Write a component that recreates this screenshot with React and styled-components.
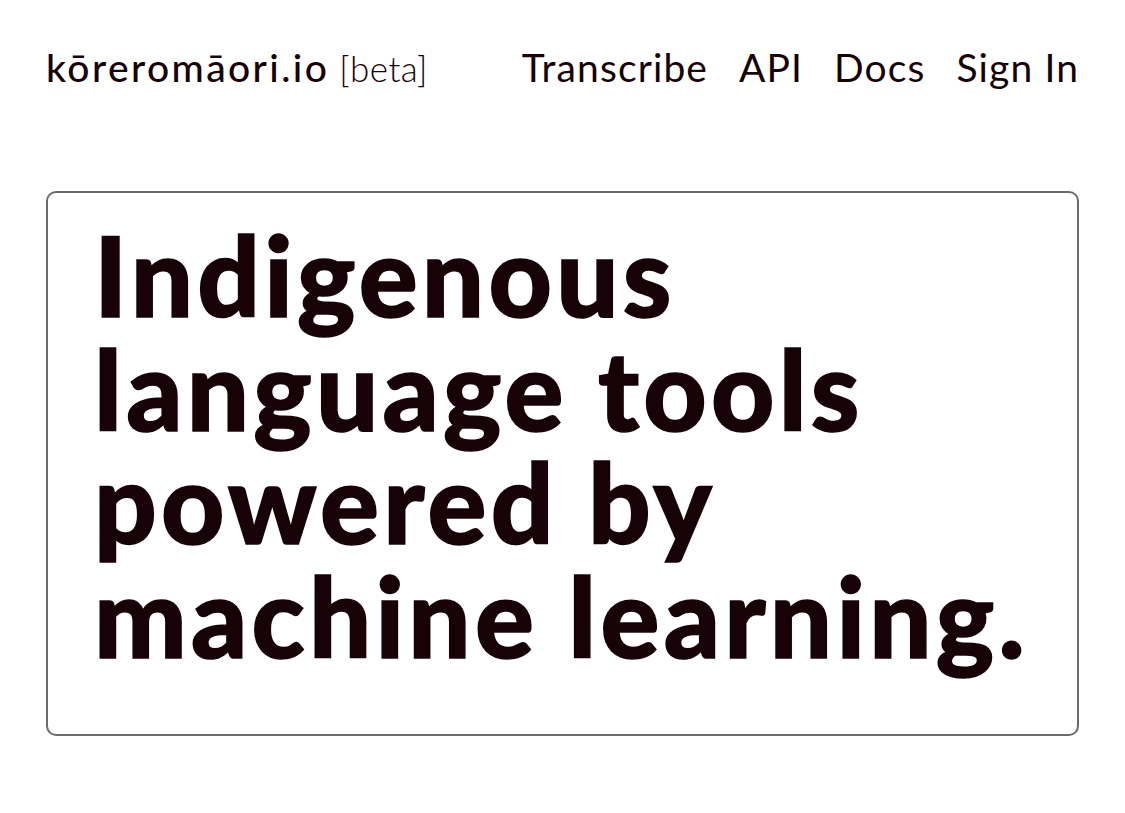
import React from "react";
import styled, { createGlobalStyle } from "styled-components";

const Global = createGlobalStyle`
  html, body { margin: 0; padding: 0; background: #ffffff; }
  body { font-family: "Lato", "Open Sans", sans-serif; color: #170307; }
`;

const Page = styled.div`
  display: flex;
  flex-direction: column;
  padding: 44px 46px 0 46px;
`;

const Header = styled.header`
  display: flex;
  align-items: baseline;
  justify-content: space-between;
  height: 55px;
`;

const Brand = styled.a`
  font-size: 39px;
  font-weight: 500;
  letter-spacing: 2.4px;
  color: #170307;
  text-decoration: none;
  white-space: nowrap;
`;

const Beta = styled.span`
  font-weight: 300;
  margin-left: 10px;
  font-size: 35px;
  letter-spacing: 0.4px;
`;

const Nav = styled.nav`
  display: flex;
  gap: 31px;
`;

const NavLink = styled.a`
  font-size: 39px;
  font-weight: 400;
  letter-spacing: 1.1px;
  color: #170307;
  text-decoration: none;
`;

const Hero = styled.section`
  margin-top: 92px;
  border: 2px solid #6b6b6b;
  border-radius: 10px;
  padding: 25px 40px 62px 46px;
`;

const Title = styled.h1`
  margin: 0;
  font-family: "Lato", sans-serif;
  font-weight: 900;
  font-size: 110px;
  line-height: 113.5px;
  letter-spacing: 4.2px;
  color: #170307;
  -webkit-text-stroke: 1.5px #170307;
`;

export default function App() {
  return (
    <>
      <Global />
      <Page>
        <Header>
          <Brand href="#">
            kōreromāori.io<Beta>[beta]</Beta>
          </Brand>
          <Nav>
            <NavLink href="#">Transcribe</NavLink>
            <NavLink href="#">API</NavLink>
            <NavLink href="#">Docs</NavLink>
            <NavLink href="#">Sign In</NavLink>
          </Nav>
        </Header>
        <Hero>
          <Title>Indigenous language tools powered by machine learning.</Title>
        </Hero>
      </Page>
    </>
  );
}
